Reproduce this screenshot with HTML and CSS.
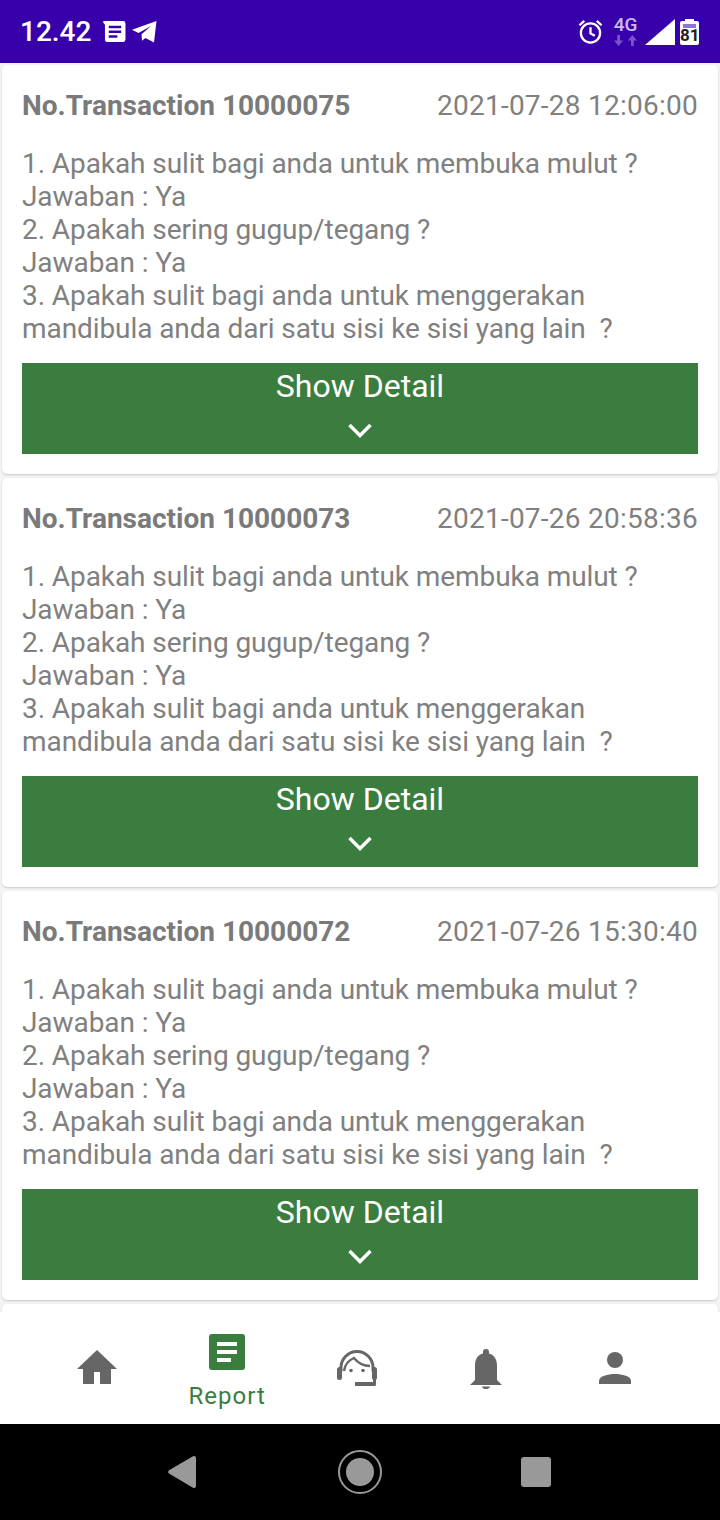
FILE: index.html
```html
<!DOCTYPE html>
<html lang="id">
<head>
  <meta charset="UTF-8" />
  <meta name="viewport" content="width=device-width, initial-scale=1.0" />
  <title>Report</title>
  <link rel="stylesheet" href="styles.css">
</head>
<body>

  <header class="status-bar">
    <div class="status-left">
      <span class="clock">12.42</span>
      <svg class="ic-note" viewBox="0 0 24 22"><path fill-rule="evenodd" d="M3 0h18a2.500 2.500 0 0 1 2.500 2.500v17a2.500 2.500 0 0 1-2.500 2.500H5a3 3 0 0 1-3-3V4L0 1.200C0 .5.800 0 1.500 0zM6 5v2.500h13V5zm0 5v2.500h13V10zm0 5v2.500h9V15z" fill="#fff"/></svg>
      <svg class="ic-send" viewBox="0 0 25 22"><path d="M24.500 0 22 21.500l-8.500-4.500-3.500 2.800-.5-6.500L19 5 6.500 12 0 8.800z" fill="#fff"/></svg>
    </div>
    <div class="status-right">
      <svg class="ic-alarm" viewBox="0 0 26 26" fill="none" stroke="#fff" stroke-width="2.400"><circle cx="13" cy="14.500" r="10"/><path d="M13 8.500v6.500l4.500 2.500M1.500 6.500 6.500 2M24.500 6.500 19.500 2"/></svg>
      <div class="net">
        <span class="net-label">4G</span>
        <svg class="ic-arrows" viewBox="0 0 26 12" fill="#7a55c8"><path d="M4 0h3v6h3.500L5.500 12 .500 6H4zM19 12h3V6h3.500L20.500 0l-5 6H19z"/></svg>
      </div>
      <svg class="ic-signal" viewBox="0 0 30 26"><path d="M30 0v26H0z" fill="#fff"/></svg>
      <div class="battery"><span class="battery-nub"></span><span class="battery-cap"></span><span class="battery-num">81</span></div>
    </div>
  </header>

  <main class="list">
    <section class="card">
      <div class="card-head"><span class="trx-no">No.Transaction 10000075</span><span class="trx-date">2021-07-28 12:06:00</span></div>
      <p class="card-body">1. Apakah sulit bagi anda untuk membuka mulut ?<br>Jawaban : Ya<br>2. Apakah sering gugup/tegang ?<br>Jawaban : Ya<br>3. Apakah sulit bagi anda untuk menggerakan<br>mandibula anda dari satu sisi ke sisi yang lain&nbsp; ?</p>
      <div class="detail-btn"><span>Show Detail</span><svg class="chevron" viewBox="0 0 24 15" fill="none" stroke="#fff" stroke-width="3.500"><path d="M1.500 2 12 12.500 22.500 2"/></svg></div>
    </section>
    <section class="card">
      <div class="card-head"><span class="trx-no">No.Transaction 10000073</span><span class="trx-date">2021-07-26 20:58:36</span></div>
      <p class="card-body">1. Apakah sulit bagi anda untuk membuka mulut ?<br>Jawaban : Ya<br>2. Apakah sering gugup/tegang ?<br>Jawaban : Ya<br>3. Apakah sulit bagi anda untuk menggerakan<br>mandibula anda dari satu sisi ke sisi yang lain&nbsp; ?</p>
      <div class="detail-btn"><span>Show Detail</span><svg class="chevron" viewBox="0 0 24 15" fill="none" stroke="#fff" stroke-width="3.500"><path d="M1.500 2 12 12.500 22.500 2"/></svg></div>
    </section>
    <section class="card">
      <div class="card-head"><span class="trx-no">No.Transaction 10000072</span><span class="trx-date">2021-07-26 15:30:40</span></div>
      <p class="card-body">1. Apakah sulit bagi anda untuk membuka mulut ?<br>Jawaban : Ya<br>2. Apakah sering gugup/tegang ?<br>Jawaban : Ya<br>3. Apakah sulit bagi anda untuk menggerakan<br>mandibula anda dari satu sisi ke sisi yang lain&nbsp; ?</p>
      <div class="detail-btn"><span>Show Detail</span><svg class="chevron" viewBox="0 0 24 15" fill="none" stroke="#fff" stroke-width="3.500"><path d="M1.500 2 12 12.500 22.500 2"/></svg></div>
    </section>
    <section class="card"></section>
  </main>

  <nav class="bottom-nav">
    <div class="nav-item">
      <svg class="nav-icon" viewBox="0 0 40 44"><path d="M20 4 0 23h6v15h11V26h6v12h11V23h6z" fill="#666"/></svg>
    </div>
    <div class="nav-item active">
      <svg class="nav-icon-report" viewBox="0 0 36 36"><path fill-rule="evenodd" d="M3 0h30a3 3 0 0 1 3 3v30a3 3 0 0 1-3 3H3a3 3 0 0 1-3-3V3a3 3 0 0 1 3-3zm5 8v4h20V8zm0 8v4h20v-4zm0 8v4h14v-4z" fill="#3b7d3e"/></svg>
      <span class="nav-label">Report</span>
    </div>
    <div class="nav-item">
      <svg class="nav-icon" viewBox="0 0 40 44">
        <path d="M4 24v-4a16 16 0 0 1 32 0v4" transform="translate(0 1.500)" fill="none" stroke="#666" stroke-width="3"/>
        <path d="M7 25C8 18 12 14 17 12 21 17 27 20 33 20" fill="none" stroke="#666" stroke-width="2.400"/>
        <rect x="0" y="21" width="5" height="13" rx="2.500" fill="#666"/>
        <rect x="35" y="21" width="5" height="13" rx="2.500" fill="#666"/>
        <circle cx="14" cy="24.500" r="1.800" fill="#666"/><circle cx="26" cy="24.500" r="1.800" fill="#666"/>
        <path d="M36 33v3H18v4h19.500a1.500 1.500 0 0 0 1.500-1.500V33z" fill="#666"/>
      </svg>
    </div>
    <div class="nav-item">
      <svg class="nav-icon" viewBox="0 0 40 44"><path d="M20 3a3 3 0 0 1 3 3v1.500c6 1.500 8 7 8 12V34l5 5H4l5-5V19.500c0-5.500 2-10.500 8-12V6a3 3 0 0 1 3-3zM16 40.500h8c-.5 2-2 2.500-4 2.500s-3.500-.5-4-2.500z" fill="#666"/></svg>
    </div>
    <div class="nav-item">
      <svg class="nav-icon" viewBox="0 0 40 44"><circle cx="20" cy="14" r="8" fill="#666"/><path d="M4 38v-3c0-5 9-7 16-7s16 2 16 7v3z" fill="#666"/></svg>
    </div>
  </nav>

  <footer class="system-nav">
    <svg class="sys-back" viewBox="0 0 28 32"><path d="M26 0a2 2 0 0 1 2 2v28a2 2 0 0 1-3 1.700L1 17.500a2 2 0 0 1 0-3.200L25 .300A2 2 0 0 1 26 0z" fill="#999"/></svg>
    <div class="sys-home"><span></span></div>
    <div class="sys-recent"></div>
  </footer>

</body>
</html>
```

FILE: styles.css
```css
* {
  box-sizing: border-box;
}

html, body {
  height: 100%;
}

body {
  margin: 0;
  height: 1520px;
  overflow: hidden;
  display: flex;
  flex-direction: column;
  font-family: Roboto, sans-serif;
  background: #f4f4f4;
}

/* status bar */
.status-bar {
  height: 63px;
  flex: none;
  background: #3700ab;
  display: flex;
  justify-content: space-between;
  align-items: center;
  padding: 0 21px 0 20px;
}

.status-left, .status-right {
  display: flex;
  align-items: center;
}

.clock {
  color: #fff;
  font-size: 28px;
  font-weight: 500;
  width: 83px;
}

.ic-note {
  width: 23px;
  height: 21px;
}

.ic-send {
  width: 25px;
  height: 22px;
  margin-left: 6px;
}

.ic-alarm {
  width: 25px;
  height: 25px;
  margin-right: 10px;
}

.net {
  width: 25px;
  display: flex;
  flex-direction: column;
  align-items: center;
  margin-right: 7px;
}

.net-label {
  color: #c9baef;
  font-size: 19px;
  font-weight: 500;
  line-height: 15px;
}

.ic-arrows {
  width: 25px;
  height: 11px;
  margin-top: 3px;
}

.ic-signal {
  width: 30px;
  height: 26px;
  margin-right: 5px;
}

.battery {
  position: relative;
  width: 19px;
  height: 24px;
  margin-top: 2px;
  background: #fff;
  border-radius: 2px;
}

.battery-nub {
  position: absolute;
  top: -2px;
  left: 5px;
  right: 5px;
  height: 2px;
  background: #fff;
}

.battery-cap {
  position: absolute;
  top: 3px;
  left: 3px;
  right: 3px;
  height: 4px;
  background: #8f73d6;
}

.battery-num {
  position: absolute;
  left: 0;
  right: 0;
  top: 5px;
  text-align: center;
  color: #222;
  font-size: 17px;
  font-weight: 700;
  line-height: 18px;
}

/* list */
.list {
  flex: 1;
  min-height: 0;
  overflow: hidden;
  display: flex;
  flex-direction: column;
  gap: 4px;
  padding: 2px 2px 0;
}

.card {
  flex: none;
  height: 409px;
  background: #fff;
  border-radius: 5px;
  box-shadow: 0 1px 2px rgba(0,0,0,0.18);
  padding: 20px;
}

.card-head {
  display: flex;
  justify-content: space-between;
  align-items: center;
  height: 40px;
}

.trx-no {
  color: #7a7a7a;
  font-size: 28px;
  font-weight: 700;
}

.trx-date {
  color: #808080;
  font-size: 28px;
  letter-spacing: 0.25px;
}

.card-body {
  margin: 22px 0 0;
  color: #808080;
  font-size: 28px;
  letter-spacing: -0.08px;
  line-height: 33px;
  white-space: nowrap;
}

.detail-btn {
  margin-top: 18px;
  height: 91px;
  background: #3b7d3e;
  color: #fff;
  font-size: 32px;
  display: flex;
  flex-direction: column;
  align-items: center;
  padding-top: 5px;
}

.detail-btn span {
  line-height: 36px;
}

.chevron {
  width: 24px;
  height: 15px;
  margin-top: 19px;
}

/* bottom nav */
.bottom-nav {
  height: 112px;
  flex: none;
  background: #fff;
  display: flex;
  padding: 0 40px 0 32px;
}

.nav-item {
  flex: 1;
  display: flex;
  flex-direction: column;
  align-items: center;
  padding-top: 34px;
}

.nav-item.active {
  padding-top: 22px;
  padding-left: 1px;
}

.nav-icon {
  width: 40px;
  height: 44px;
}

.nav-icon-report {
  width: 36px;
  height: 36px;
}

.nav-label {
  color: #3b7d3e;
  font-size: 24px;
  letter-spacing: 1px;
  line-height: 28px;
  margin-top: 12px;
}

/* android nav */
.system-nav {
  height: 96px;
  flex: none;
  background: #000;
  display: flex;
  align-items: center;
  padding-left: 168px;
}

.sys-back {
  width: 28px;
  height: 32px;
}

.sys-home {
  width: 44px;
  height: 44px;
  margin-left: 142px;
  border: 2px solid #999;
  border-radius: 50%;
  display: flex;
  align-items: center;
  justify-content: center;
}

.sys-home span {
  width: 28px;
  height: 28px;
  background: #999;
  border-radius: 50%;
}

.sys-recent {
  width: 30px;
  height: 30px;
  margin-left: 139px;
  background: #999;
  border-radius: 3px;
}
```
